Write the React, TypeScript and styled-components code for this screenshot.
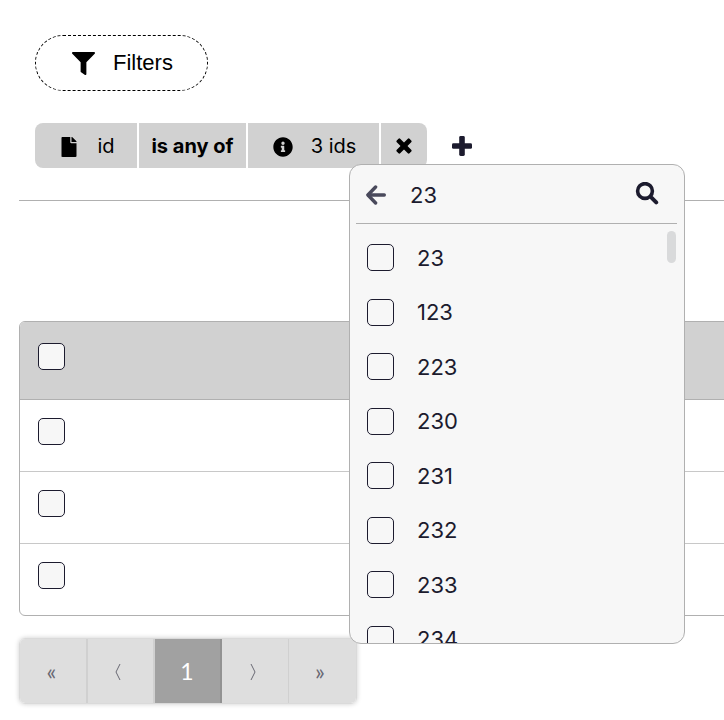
import React, { useState } from "react";
import styled, { createGlobalStyle, css } from "styled-components";
import { FaFilter, FaFile, FaInfoCircle } from "react-icons/fa";

const ink = "#1c1b2e";
const line = "#b0b0b0";
const chipGrey = "#d1d1d1";

const GlobalStyle = createGlobalStyle`
  *, *::before, *::after { box-sizing: border-box; }
  body {
    margin: 0;
    background: #fff;
    color: ${ink};
    font-family: Inter, "Liberation Sans", sans-serif;
    overflow-x: hidden;
  }
  button, input { font: inherit; color: inherit; }
  button { cursor: pointer; }
`;

const Page = styled.main`
  display: flex;
  flex-direction: column;
  padding: 35px 0 16px 19px;
`;

const FilterArea = styled.section`
  display: flex;
  flex-direction: column;
  align-items: flex-start;
  gap: 32px;
  padding: 0 16px 32px;
  border-bottom: 1px solid ${line};
`;

const FiltersButton = styled.button`
  display: flex;
  align-items: center;
  gap: 18px;
  height: 56px;
  padding: 0 34px 0 36px;
  border: 1px dashed #000;
  border-radius: 28px;
  background: #fff;
  color: #000;
  font-family: "Liberation Sans", Arial, sans-serif;
  font-size: 22px;
`;

const FilterRow = styled.div`
  display: flex;
  align-items: center;
  height: 45px;
`;

const ChipGroup = styled.div`
  display: flex;
  gap: 2px;
  height: 45px;
  border-radius: 8px;
  overflow: hidden;
`;

const Chip = styled.button<{ $width: number; $bold?: boolean }>`
  display: flex;
  align-items: center;
  justify-content: center;
  gap: 18px;
  width: ${(p) => p.$width}px;
  padding: 0;
  border: 0;
  background: ${chipGrey};
  color: #000;
  font-size: 20px;
  font-weight: ${(p) => (p.$bold ? 700 : 400)};
  white-space: nowrap;
`;

const IconChip = styled(Chip)`
  padding-left: 2px;
  svg { margin-top: 2px; }
`;

const AddAnchor = styled.div`
  position: relative;
  display: flex;
  margin-left: 20px;
`;

const IconButton = styled.button`
  display: flex;
  align-items: center;
  justify-content: center;
  width: 30px;
  height: 30px;
  padding: 0;
  border: 0;
  background: none;
`;

const Popover = styled.div`
  position: absolute;
  z-index: 2;
  top: 33px;
  left: -98px;
  width: 336px;
  height: 480px;
  padding: 0 7px 0 6px;
  overflow: hidden;
  border: 1px solid ${line};
  border-radius: 12px;
  background: #f7f7f7;
`;

const SearchBar = styled.div`
  display: flex;
  align-items: center;
  gap: 14px;
  height: 59px;
  padding: 0 15px 0 5px;
  border-bottom: 1px solid ${line};
`;

const BackButton = styled(IconButton)`
  padding-top: 2px;
  color: #4a4a5c;
`;

const SearchInput = styled.input`
  flex: 1;
  min-width: 0;
  padding: 2px 0 0 5px;
  border: 0;
  outline: 0;
  background: none;
  font-size: 22px;
`;

const OptionArea = styled.div`
  display: flex;
  align-items: flex-start;
  justify-content: space-between;
  padding-top: 7px;
`;

const Options = styled.ul`
  display: flex;
  flex: 1;
  flex-direction: column;
  height: 436px;
  margin: 0;
  padding: 0 0 0 11px;
  list-style: none;
`;

const Option = styled.li`
  display: flex;
  flex: 1;
  align-items: center;
`;

const OptionLabel = styled.label`
  display: flex;
  align-items: center;
  gap: 23px;
  font-size: 22px;
`;

const ScrollThumb = styled.div`
  width: 9px;
  height: 32px;
  margin-right: 1px;
  border-radius: 5px;
  background: #d9dadb;
`;

const Checkbox = styled.input.attrs({ type: "checkbox" })`
  appearance: none;
  display: block;
  flex: none;
  width: 27px;
  height: 27px;
  margin: 0;
  border: 1px solid ${ink};
  border-radius: 5px;
  background: #f7f7f7;
  &:checked { background: ${ink}; box-shadow: inset 0 0 0 5px #f7f7f7; }
`;

const TableFrame = styled.div`
  margin: 120px -20px 0 0;
  border: 1px solid ${line};
  border-radius: 6px;
  overflow: hidden;
`;

const Table = styled.table`
  width: 100%;
  border-collapse: separate;
  border-spacing: 0;
`;

const cell = css`
  padding: 0 18px;
  text-align: left;
`;

const HeadCell = styled.th`
  ${cell}
  height: 78px;
  padding-bottom: 8px;
  border-bottom: 1px solid ${line};
  background: ${chipGrey};
`;

const Cell = styled.td`
  ${cell}
  height: 72px;
  padding-bottom: 8px;
  tr:not(:last-child) > & { border-bottom: 1px solid #c8c8c8; }
  tr:last-child > & { height: 71px; }
`;

const Pager = styled.nav`
  display: flex;
  align-self: flex-start;
  margin-top: 22px;
  border: 1px solid #dadada;
  border-radius: 6px;
  overflow: hidden;
  box-shadow: 0 0 5px rgba(0, 0, 0, 0.2);
`;

const PageButton = styled.button<{ $active?: boolean; $edge?: "soft" | "none" }>`
  width: 67px;
  height: 64px;
  padding: 0 ${(p) => (p.$active ? 1 : 5)}px 0 0;
  border: 0;
  border-right: ${(p) => (p.$edge === "none" ? "0" : p.$edge === "soft" ? "1px" : "2px")} solid
    ${(p) => (p.$active ? "#929292" : "#d0d0d0")};
  background: ${(p) => (p.$active ? "#a1a1a1" : "#dedede")};
  color: ${(p) => (p.$active ? "#fff" : "#686873")};
  font-family: Lato, "Noto Sans", sans-serif;
  font-size: 23px;
  &:first-child { width: 68px; padding-right: 3px; }
`;

const Chevron = styled.svg`
  display: block;
  margin: 2px auto 0;
  fill: none;
  stroke: currentColor;
  stroke-width: 1;
`;

const ids = ["23", "123", "223", "230", "231", "232", "233", "234"];
const rows = ["first", "second", "third"];

function SearchIcon() {
  return (
    <svg width="24" height="24" viewBox="0 0 24 24" fill="none" stroke="currentColor" aria-hidden="true">
      <circle cx="10" cy="9" r="7.4" strokeWidth="3.6" />
      <path d="M15 14L17 16" strokeWidth="2.8" />
      <path d="M17 16.2L21.2 20.4" strokeWidth="4" strokeLinecap="round" />
    </svg>
  );
}

function BackIcon() {
  return (
    <svg width="20" height="20" viewBox="0 0 20 20" fill="none" stroke="currentColor" strokeWidth="3.4" strokeLinecap="round" strokeLinejoin="round" aria-hidden="true">
      <path d="M9.6 2L1.9 10L9.6 18" />
      <path d="M2.5 10H18.3" />
    </svg>
  );
}

function CloseIcon() {
  return (
    <svg width="16" height="16" viewBox="0 0 16 16" fill="currentColor" aria-hidden="true">
      <g transform="rotate(45 8 8)">
        <rect x="-1" y="5.6" width="18" height="4.8" rx="1.2" />
        <rect x="5.6" y="-1" width="4.8" height="18" rx="1.2" />
      </g>
    </svg>
  );
}

function PlusIcon() {
  return (
    <svg width="20" height="20" viewBox="0 0 20 20" fill="currentColor" aria-hidden="true">
      <rect x="0" y="7.2" width="20" height="5.6" rx="1.4" />
      <rect x="7.2" y="0" width="5.6" height="20" rx="1.4" />
    </svg>
  );
}

export default function App() {
  const [query, setQuery] = useState("23");

  return (
    <>
      <GlobalStyle />
      <Page>
        <FilterArea>
          <FiltersButton type="button">
            <FaFilter size={23} />
            Filters
          </FiltersButton>
          <FilterRow>
            <ChipGroup>
              <IconChip type="button" $width={102}>
                <FaFile size={20} />
                id
              </IconChip>
              <Chip type="button" $width={107} $bold>
                is any of
              </Chip>
              <IconChip type="button" $width={131}>
                <FaInfoCircle size={20} />
                3 ids
              </IconChip>
              <Chip type="button" $width={46} aria-label="Remove filter">
                <CloseIcon />
              </Chip>
            </ChipGroup>
            <AddAnchor>
              <IconButton type="button" aria-label="Add filter">
                <PlusIcon />
              </IconButton>
              <Popover role="dialog" aria-label="Choose ids">
                <SearchBar>
                  <BackButton type="button" aria-label="Back">
                    <BackIcon />
                  </BackButton>
                  <SearchInput
                    aria-label="Search ids"
                    value={query}
                    onChange={(e) => setQuery(e.target.value)}
                  />
                  <IconButton type="button" aria-label="Search">
                    <SearchIcon />
                  </IconButton>
                </SearchBar>
                <OptionArea>
                  <Options>
                    {ids.map((id) => (
                      <Option key={id}>
                        <OptionLabel>
                          <Checkbox />
                          {id}
                        </OptionLabel>
                      </Option>
                    ))}
                  </Options>
                  <ScrollThumb />
                </OptionArea>
              </Popover>
            </AddAnchor>
          </FilterRow>
        </FilterArea>

        <TableFrame>
          <Table>
            <thead>
              <tr>
                <HeadCell scope="col">
                  <Checkbox aria-label="Select all rows" />
                </HeadCell>
              </tr>
            </thead>
            <tbody>
              {rows.map((row) => (
                <tr key={row}>
                  <Cell>
                    <Checkbox aria-label={`Select ${row} row`} />
                  </Cell>
                </tr>
              ))}
            </tbody>
          </Table>
        </TableFrame>

        <Pager aria-label="Pagination">
          <PageButton type="button" aria-label="First page">«</PageButton>
          <PageButton type="button" aria-label="Previous page">
            <Chevron width="8" height="18" viewBox="0 0 8 18">
              <path d="M6 1L2 9L6 17" />
            </Chevron>
          </PageButton>
          <PageButton type="button" $active aria-current="page">1</PageButton>
          <PageButton type="button" $edge="soft" aria-label="Next page">
            <Chevron width="8" height="18" viewBox="0 0 8 18">
              <path d="M2 1L6 9L2 17" />
            </Chevron>
          </PageButton>
          <PageButton type="button" $edge="none" aria-label="Last page">»</PageButton>
        </Pager>
      </Page>
    </>
  );
}
